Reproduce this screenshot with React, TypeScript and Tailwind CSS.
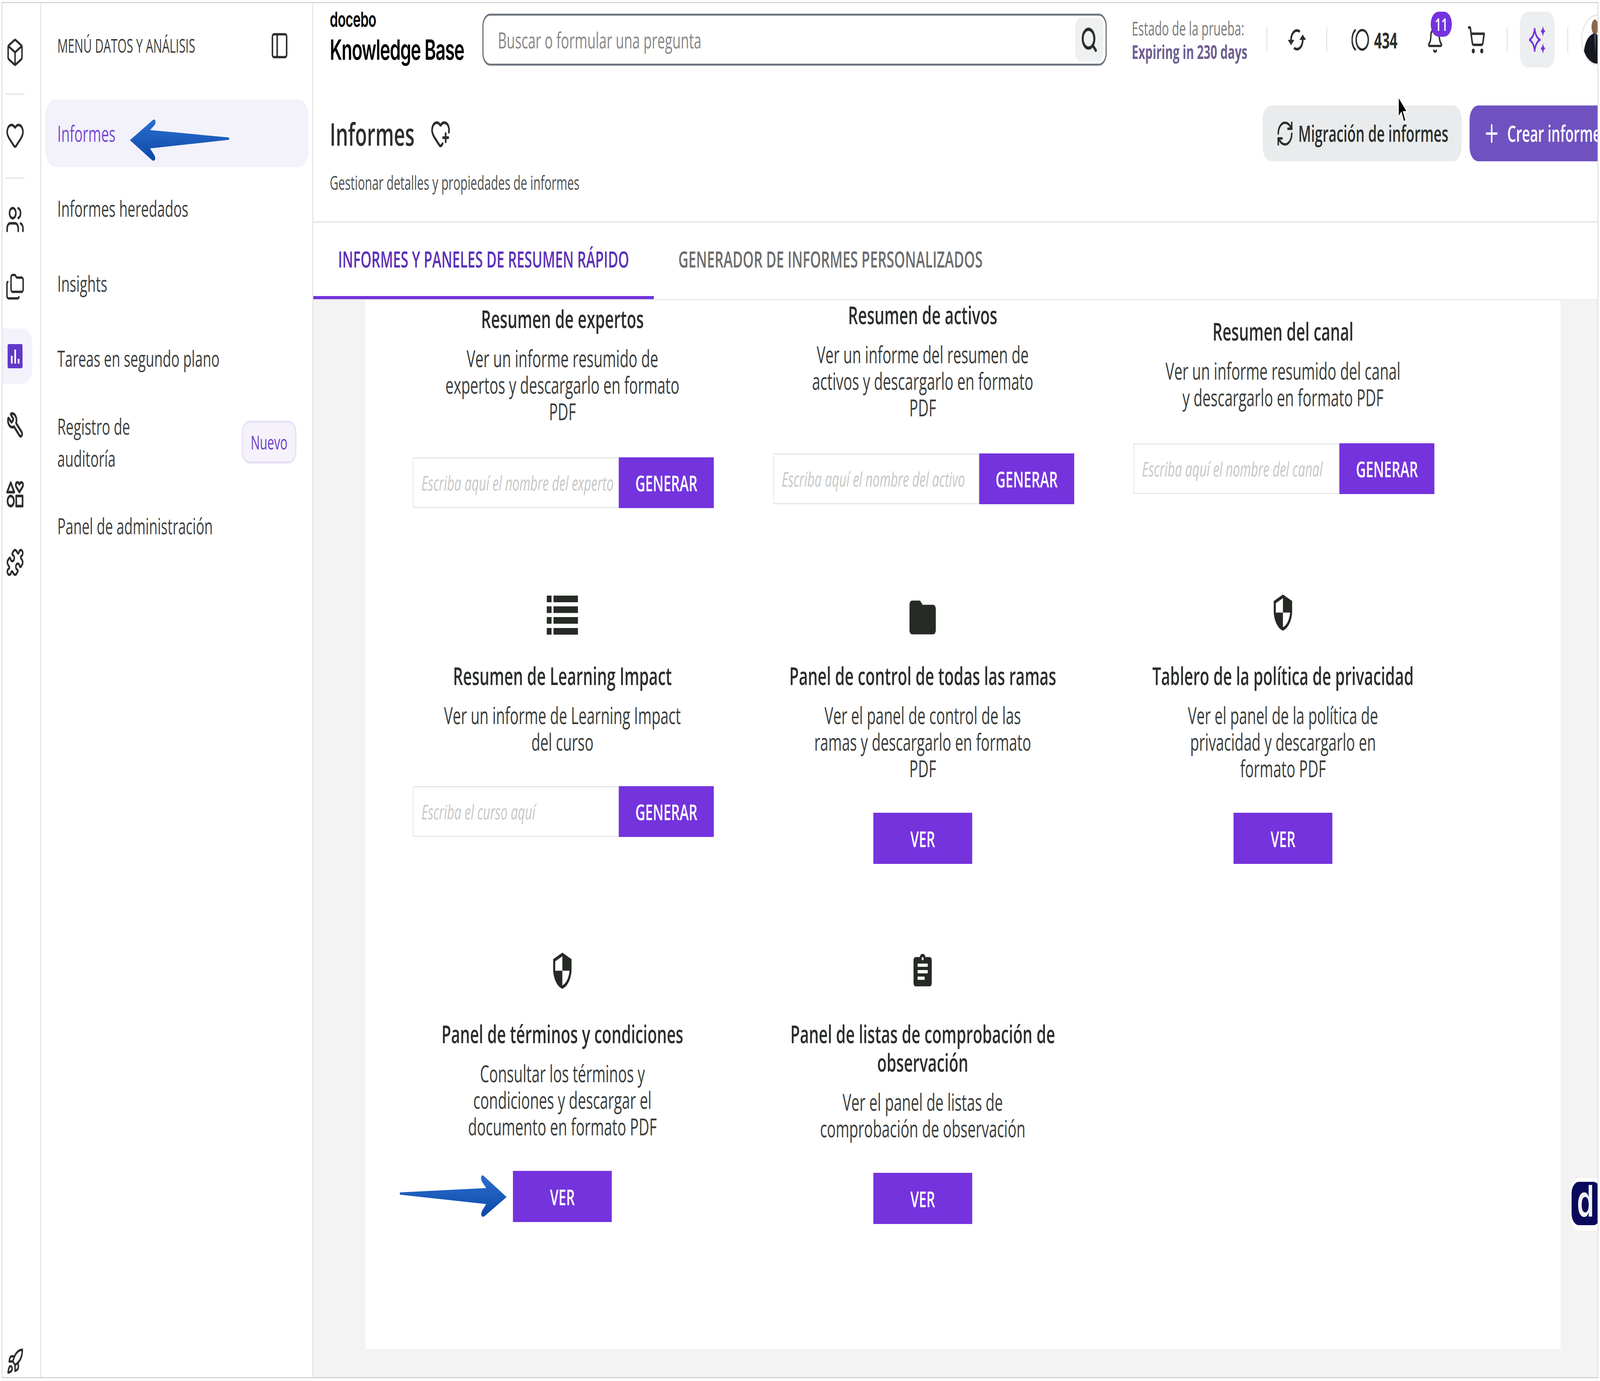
import React from "react";
import { Box, Heart, Users, Folders, Wrench, Puzzle, Rocket, PanelLeft, HeartPlus, RefreshCw, ShoppingCart, Bell, Search, Plus } from "lucide-react";

const PURPLE = "#7433dd";

function ListIcon({ className }: { className?: string }) {
  return (
    <svg viewBox="0 0 129 100" width={129} height={100} className={className} fill="#262a25">
      {[0, 27.5, 55, 83].map((y) => (
        <g key={y}>
          <rect x="0" y={y} width="20" height="17" />
          <rect x="28" y={y} width="101" height="17" />
        </g>
      ))}
    </svg>
  );
}
function FolderIcon({ className }: { className?: string }) {
  return (
    <svg viewBox="0 0 24 24" width={130} height={130} className={className} fill="#262a25">
      <path d="M10 4H4c-1.1 0-1.99.9-1.99 2L2 18c0 1.1.9 2 2 2h16c1.1 0 2-.9 2-2V8c0-1.1-.9-2-2-2h-8l-2-2z" />
    </svg>
  );
}
function ShieldIcon({ className }: { className?: string }) {
  return (
    <svg viewBox="0 0 24 24" width={101} height={101} className={className} fill="#262a25">
      <path d="M12 1L3 5v6c0 5.55 3.84 10.74 9 12 5.16-1.26 9-6.45 9-12V5l-9-4zm0 10.99h7c-.53 4.12-3.28 7.79-7 8.94V12H5V6.3l7-3.11v8.8z" />
    </svg>
  );
}
function ClipboardIcon({ className }: { className?: string }) {
  return (
    <svg viewBox="0 0 24 24" width={100} height={100} className={className} fill="#262a25">
      <path d="M19 3h-4.18C14.4 1.84 13.3 1 12 1c-1.3 0-2.4.84-2.82 2H5c-1.1 0-2 .9-2 2v14c0 1.1.9 2 2 2h14c1.1 0 2-.9 2-2V5c0-1.1-.9-2-2-2zm-7 0c.55 0 1 .45 1 1s-.45 1-1 1-1-.45-1-1 .45-1 1-1zm2 14H7v-2h7v2zm3-4H7v-2h10v2zm0-4H7V7h10v2z" />
    </svg>
  );
}
function SyncIcon({ size, className }: { size: number; className?: string }) {
  return (
    <svg viewBox="0 0 24 24" width={size} height={size} className={className} fill="#2b2f2c">
      <path d="M12 4V1L8 5l4 4V6c3.31 0 6 2.69 6 6 0 1.01-.25 1.97-.7 2.8l1.46 1.46C19.54 15.03 20 13.57 20 12c0-4.42-3.58-8-8-8zm0 14c-3.31 0-6-2.69-6-6 0-1.01.25-1.97.7-2.8L5.24 7.74C4.46 8.97 4 10.43 4 12c0 4.42 3.58 8 8 8v3l4-4-4-4v3z" />
    </svg>
  );
}
function ShapesIcon() {
  return (
    <svg viewBox="0 0 24 24" width={78} height={78} fill="none" stroke="#2b2f2c" strokeWidth="2.1" strokeLinejoin="round">
      <path d="M6.5 3L11 10.5H2Z" />
      <path d="M17.5 10.5L13.6 6.4C12.2 4.8 13.2 2.8 15 2.8C16.1 2.8 17 3.5 17.5 4.4C18 3.5 18.9 2.8 20 2.8C21.8 2.8 22.8 4.8 21.4 6.4Z" />
      <circle cx="6.5" cy="17.5" r="4" />
      <rect x="13.5" y="13.5" width="8" height="8" />
    </svg>
  );
}

function GenInput({ placeholder }: { placeholder: string }) {
  return (
    <div className="flex h-[130px] w-[1239px] ml-[8px]">
      <input
        readOnly
        placeholder={placeholder}
        className="w-[848px] h-full bg-white border-[3px] border-[#e6e7e8] pl-[32px] pr-[20px] text-[51.5px] text-[#555] outline-none placeholder:italic placeholder:text-[#c6c6c6]"
      />
      <button className="w-[391px] h-full bg-[#7433dd] text-white text-[56px] font-semibold">GENERAR</button>
    </div>
  );
}
function VerButton() {
  return <button className="w-[407px] h-[131px] bg-[#7433dd] text-white text-[56px] font-semibold">VER</button>;
}

function Cell({
  title,
  desc,
  icon,
  action,
  pad,
  gap,
}: {
  title: string[];
  desc: string[];
  icon?: React.ReactNode;
  action: React.ReactNode;
  pad?: string;
  gap?: string;
}) {
  return (
    <div className={`flex flex-col items-center text-center ${pad ?? ""}`}>
      {icon ? <div className="h-[193px] flex justify-center items-start">{icon}</div> : null}
      <h3 className="text-[64px] leading-[73px] font-semibold text-[#2b2f2c]">
        {title.map((t) => (
          <div key={t}>{t}</div>
        ))}
      </h3>
      <div className="mt-[31px] text-[60px] leading-[68px] text-[#3a3d3b]">
        {desc.map((t) => (
          <div key={t}>{t}</div>
        ))}
      </div>
      <div className={gap ?? "mt-[80px]"}>{action}</div>
    </div>
  );
}

function RailIcon({ children, className }: { children: React.ReactNode; className: string }) {
  return <div className={`w-[104px] h-[144px] flex items-center justify-center text-[#2b2f2c] ${className}`}>{children}</div>;
}

function NavItem({ label, active }: { label: string; active?: boolean }) {
  return (
    <div
      className={`h-[173px] rounded-[40px] pl-[49px] flex items-center text-[57px] ${
        active ? "bg-[#f3f2fb] text-[#7a45d3]" : "text-[#3d3f3e]"
      }`}
    >
      {label}
    </div>
  );
}

export default function App() {
  // The page is drawn at the reference's 6588x3536. The browser window can be narrower
  // than that, so the width is fitted to the real window; the scale is 1 at full width.
  const fit = Math.min(1, window.innerWidth / 6588);
  return (
    <div className="w-screen h-screen overflow-hidden bg-white">
      <div
        className="relative w-[6588px] h-[3536px] origin-top-left bg-white pt-[8px] pl-[10px] pr-[10px] pb-[10px] font-['Open_Sans','Noto_Sans',sans-serif]"
        style={{ transform: `scaleX(${fit})` }}
      >
        <div className="relative flex w-full h-full overflow-hidden bg-white shadow-[0_0_0_3px_#d4d4d4]">
          {/* rail */}
          <aside className="w-[160px] shrink-0 h-full border-r-[5px] border-[#e8e8e8] flex flex-col pt-[54px]">
            <RailIcon className="">
              <Box size={76} strokeWidth={1.9} />
            </RailIcon>
            <div className="ml-[13px] mt-[33px] w-[78px] h-[4px] bg-[#e8e8e8]" />
            <RailIcon className="mt-[31px]">
              <Heart size={78} strokeWidth={2} />
            </RailIcon>
            <div className="ml-[13px] mt-[36px] w-[78px] h-[4px] bg-[#e8e8e8]" />
            <RailIcon className="mt-[32px]">
              <Users size={78} strokeWidth={2} />
            </RailIcon>
            <RailIcon className="mt-[28px]">
              <Folders size={80} strokeWidth={1.8} />
            </RailIcon>
            <div className="mt-[35px] w-[123px] h-[142px] rounded-r-[40px] bg-[#f3f2fb]">
              <div className="w-[104px] h-full flex items-center justify-center">
                <svg viewBox="0 0 62 62" width={62} height={62}>
                  <rect width="62" height="62" rx="5" fill="#6238c8" />
                  <rect x="14" y="30" width="7" height="20" fill="#fff" />
                  <rect x="28" y="14" width="7" height="36" fill="#fff" />
                  <rect x="42" y="38" width="7" height="12" fill="#fff" />
                </svg>
              </div>
            </div>
            <RailIcon className="mt-[33px]">
              <Wrench size={70} strokeWidth={2.4} className="-scale-x-100" />
            </RailIcon>
            <RailIcon className="mt-[33px]">
              <ShapesIcon />
            </RailIcon>
            <RailIcon className="mt-[31px]">
              <Puzzle size={76} strokeWidth={2} />
            </RailIcon>
            <div className="mt-auto mb-[4px] w-[104px] h-[72px] flex items-center justify-center text-[#2b2f2c]">
              <Rocket size={72} strokeWidth={2} />
            </div>
          </aside>

          {/* sidebar */}
          <nav className="w-[1120px] shrink-0 h-full border-r-[5px] border-[#e8e8e8] pl-[17px] pr-[15px]">
            <div className="h-[247px] pl-[49px] pr-[80px] flex items-center justify-between pb-[30px]">
              <span className="text-[48.5px] text-[#3d3f3e]">MENÚ DATOS Y ANÁLISIS</span>
              <PanelLeft size={78} strokeWidth={1.9} className="text-[#2b2f2c]" />
            </div>
            <div className="flex flex-col gap-[19px]">
              <NavItem label="Informes" active />
              <NavItem label="Informes heredados" />
              <NavItem label="Insights" />
              <NavItem label="Tareas en segundo plano" />
              <div className="h-[218px] pl-[49px] pr-[49px] flex items-center justify-between text-[57px] leading-[82px] text-[#3d3f3e]">
                <span>
                  Registro de
                  <br />
                  auditoría
                </span>
                <span className="w-[226px] h-[110px] rounded-[32px] bg-[#f5f2fb] border-[6px] border-[#e9e3f6] text-[50px] text-[#6b3fc4] flex items-center justify-center">
                  Nuevo
                </span>
              </div>
              <NavItem label="Panel de administración" />
            </div>
          </nav>

          {/* main */}
          <main className="flex-1 min-w-0 h-full flex flex-col overflow-hidden">
            {/* top bar */}
            <div className="h-[187px] shrink-0 flex items-center pl-[68px]">
              <div className="w-[628px] shrink-0 flex flex-col -mt-[18px] font-['Inter',sans-serif] text-black">
                <span className="text-[54px] leading-[68px] font-semibold tracking-[-1px]">docebo</span>
                <span className="text-[72px] leading-[86px] font-semibold tracking-[-2px]">Knowledge Base</span>
              </div>
              <div className="w-[2571px] h-[133px] shrink-0 rounded-[32px] border-[5px] border-[#6f7680] flex items-center pl-[59px] pr-[9px]">
                <input
                  readOnly
                  placeholder="Buscar o formular una pregunta"
                  className="flex-1 min-w-0 h-full text-[56px] outline-none bg-transparent placeholder:text-[#878787]"
                />
                <div className="w-[116px] h-[111px] rounded-[22px] bg-[#eef0f1] flex items-center justify-center">
                  <Search size={72} strokeWidth={2.8} className="text-[#2b2f2c]" />
                </div>
              </div>
              <div className="ml-[103px] w-[554px] shrink-0 flex flex-col text-[48.5px] leading-[60px]">
                <span className="text-[#7a7a7a]">Estado de la prueba:</span>
                <span className="font-bold text-[#6e5f92]">Expiring in 230 days</span>
              </div>
              <div className="w-[4px] h-[63px] shrink-0 bg-[#e3e3e3]" />
              <div className="w-[243px] shrink-0 flex justify-center">
                <SyncIcon size={82} className="rotate-90" />
              </div>
              <div className="w-[4px] h-[63px] shrink-0 bg-[#e3e3e3]" />
              <svg viewBox="0 0 73 62" width={73} height={62} className="ml-[100px] shrink-0" fill="none" stroke="#2b2f2c" strokeWidth="6">
                <circle cx="44" cy="31" r="25" />
                <path d="M17 5A30 30 0 0 0 17 57" />
              </svg>
              <span className="ml-[20px] w-[94px] shrink-0 text-[56px] font-bold text-[#2b2f2c]">434</span>
              <div className="relative ml-[119px] w-[76px] h-[68px] shrink-0 flex justify-center">
                <Bell size={70} strokeWidth={2} className="text-[#2b2f2c]" />
                <span className="absolute -top-[38px] left-[20px] w-[87px] h-[64px] rounded-full bg-[#7433dd] text-white text-[46px] font-semibold flex items-center justify-center">
                  11
                </span>
              </div>
              <ShoppingCart size={76} strokeWidth={2} className="ml-[94px] shrink-0 text-[#2b2f2c]" />
              <div className="ml-[87px] w-[4px] h-[63px] shrink-0 bg-[#e3e3e3]" />
              <div className="ml-[50px] w-[143px] h-[143px] shrink-0 rounded-[32px] bg-[#eceef0] flex items-center justify-center">
                <svg viewBox="0 0 68 72" width={68} height={72} fill={PURPLE}>
                  <path d="M23 8Q27 30 45 36Q27 42 23 64Q19 42 1 36Q19 30 23 8Z" fill="none" stroke={PURPLE} strokeWidth="6" strokeLinejoin="round" />
                  <path d="M57 0Q59 11 67 14Q59 17 57 28Q55 17 47 14Q55 11 57 0Z" />
                  <path d="M57 44Q59 55 67 58Q59 61 57 72Q55 61 47 58Q55 55 57 44Z" />
                </svg>
              </div>
              <div className="ml-[52px] w-[4px] h-[63px] shrink-0 bg-[#e3e3e3]" />
              <div className="relative ml-[54px] w-[130px] h-[130px] shrink-0 rounded-full border-[4px] border-[#e6e6e6] overflow-hidden bg-white">
                <svg viewBox="0 0 130 130" width={130} height={130} className="block">
                  <ellipse cx="52" cy="28" rx="14" ry="19" fill="#8a6a4e" />
                  <path d="M4 125C4 80 14 52 50 44C62 46 70 52 72 66V125Z" fill="#14171d" />
                  <path d="M49 46L56 46L54 100Z" fill="#3d5a80" />
                </svg>
              </div>
            </div>

            {/* page head */}
            <div className="h-[375px] shrink-0 flex border-b-[4px] border-[#e8e8e8] pl-[68px]">
              <div className="w-[3841px] shrink-0 pt-[92px]">
                <div className="flex items-center h-[110px]">
                  <h1 className="text-[80px] leading-[110px] font-semibold text-[#2b2f2c]">Informes</h1>
                  <HeartPlus size={84} strokeWidth={2} className="ml-[65px] text-[#2b2f2c]" />
                </div>
                <p className="mt-[34px] text-[48.5px] leading-[72px] text-[#4e504f]">Gestionar detalles y propiedades de informes</p>
              </div>
              <div className="pt-[75px] flex gap-[33px] shrink-0">
                <button className="w-[819px] h-[143px] rounded-[36px] bg-[#e9ebec] flex items-center justify-center gap-[18px] text-[57px] font-semibold text-[#2b2f2c]">
                  <RefreshCw size={74} strokeWidth={2} />
                  Migración de informes
                </button>
                <button className="w-[640px] h-[143px] rounded-[36px] bg-[#6f52bf] flex items-center pl-[55px] gap-[28px] text-[57px] font-semibold text-white">
                  <Plus size={72} strokeWidth={2} />
                  Crear informe
                </button>
              </div>
            </div>

            {/* tabs */}
            <div className="h-[199px] shrink-0 flex border-b-[3px] border-[#ececec]">
              <div className="w-[1402px] h-[196px] border-b-[8px] border-[#7433dd] flex items-center justify-center text-[57px] font-semibold text-[#5b2fb8]">
                INFORMES Y PANELES DE RESUMEN RÁPIDO
              </div>
              <div className="px-[101px] h-[196px] flex items-center pb-[8px] text-[57px] font-semibold text-[#6d6d6d]">
                GENERADOR DE INFORMES PERSONALIZADOS
              </div>
            </div>

            {/* content */}
            <div className="flex-1 min-h-0 bg-[#f3f3f3] pl-[214px] pr-[152px] pb-[72px]">
              <div className="h-full bg-white overflow-hidden pl-[70px] grid grid-cols-[repeat(3,1483.5px)] grid-rows-[731px_917px_auto]">
                <Cell
                  pad="pt-[10px]"
                  title={["Resumen de expertos"]}
                  desc={["Ver un informe resumido de", "expertos y descargarlo en formato", "PDF"]}
                  gap="mt-[84px]"
                  action={<GenInput placeholder="Escriba aquí el nombre del experto" />}
                />
                <Cell
                  title={["Resumen de activos"]}
                  desc={["Ver un informe del resumen de", "activos y descargarlo en formato", "PDF"]}
                  gap="mt-[84px]"
                  action={<GenInput placeholder="Escriba aquí el nombre del activo" />}
                />
                <Cell
                  pad="pt-[42px]"
                  title={["Resumen del canal"]}
                  desc={["Ver un informe resumido del canal", "y descargarlo en formato PDF"]}
                  gap="mt-[84px]"
                  action={<GenInput placeholder="Escriba aquí el nombre del canal" />}
                />
                <Cell
                  icon={<ListIcon className="mt-[25px]" />}
                  title={["Resumen de Learning Impact"]}
                  desc={["Ver un informe de Learning Impact", "del curso"]}
                  action={<GenInput placeholder="Escriba el curso aquí" />}
                />
                <Cell
                  icon={<FolderIcon className="mt-[16px]" />}
                  title={["Panel de control de todas las ramas"]}
                  desc={["Ver el panel de control de las", "ramas y descargarlo en formato", "PDF"]}
                  action={<VerButton />}
                />
                <Cell
                  icon={<ShieldIcon className="mt-[18px]" />}
                  title={["Tablero de la política de privacidad"]}
                  desc={["Ver el panel de la política de", "privacidad y descargarlo en", "formato PDF"]}
                  action={<VerButton />}
                />
                <Cell
                  icon={<ShieldIcon className="mt-[18px]" />}
                  title={["Panel de términos y condiciones"]}
                  desc={["Consultar los términos y", "condiciones y descargar el", "documento en formato PDF"]}
                  action={<VerButton />}
                />
                <Cell
                  icon={<ClipboardIcon className="mt-[21px]" />}
                  title={["Panel de listas de comprobación de", "observación"]}
                  desc={["Ver el panel de listas de", "comprobación de observación"]}
                  action={<VerButton />}
                />
              </div>
            </div>
          </main>

          {/* chat launcher */}
          <div className="absolute right-0 top-[3008px] w-[110px] h-[135px] bg-white rounded-l-[36px] pl-[3px] pt-[10px] overflow-hidden">
            <div className="w-[120px] h-[111px] rounded-[30px] bg-[#0a0a5c] text-[#f2f2f2] font-['Inter',sans-serif] text-[112px] leading-[96px] font-semibold pl-[22px]">
              d
            </div>
          </div>
        </div>

        {/* annotations over the page */}
        <svg className="absolute left-[530px] top-[300px]" width={420} height={116} viewBox="0 0 420 116">
          <defs>
            <linearGradient id="blueA" x1="0" y1="0" x2="0" y2="1">
              <stop offset="0" stopColor="#2a6fd0" />
              <stop offset="1" stopColor="#0d48a6" />
            </linearGradient>
          </defs>
          <path d="M5 59L98 8Q107 3 110 10Q112 16 104 22L88 33L412 52Q416 55 412 58L88 80L104 96Q112 104 108 109Q103 114 96 110Z" fill="url(#blueA)" />
        </svg>
        <svg className="absolute left-[1640px] top-[3005px]" width={450} height={116} viewBox="0 0 450 116">
          <defs>
            <linearGradient id="blueB" x1="0" y1="0" x2="0" y2="1">
              <stop offset="0" stopColor="#2a6fd0" />
              <stop offset="1" stopColor="#0d48a6" />
            </linearGradient>
          </defs>
          <path d="M446 60L352 6Q344 2 341 9Q339 15 346 22L362 37L8 48Q3 51 8 54L362 78L346 94Q339 102 343 108Q348 113 355 109Z" fill="url(#blueB)" />
        </svg>

        {/* mouse pointer */}
        <svg className="absolute left-[5754px] top-[244px]" width={44} height={72} viewBox="0 0 44 72">
          <path d="M4 4V56L16 44L26 68L34 64L24 42H40Z" fill="#000" stroke="#fff" strokeWidth="3" />
        </svg>
      </div>
    </div>
  );
}
